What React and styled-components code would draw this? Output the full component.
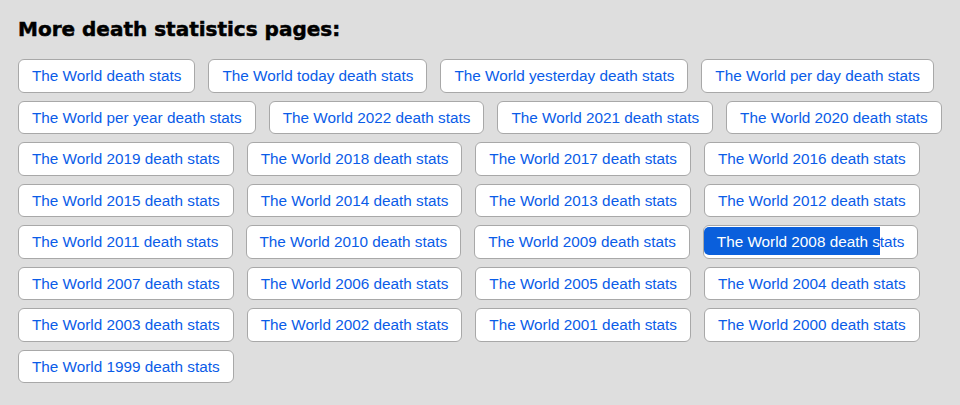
import React from "react";
import styled, { createGlobalStyle } from "styled-components";

const links = [
  "The World death stats",
  "The World today death stats",
  "The World yesterday death stats",
  "The World per day death stats",
  "The World per year death stats",
  "The World 2022 death stats",
  "The World 2021 death stats",
  "The World 2020 death stats",
  "The World 2019 death stats",
  "The World 2018 death stats",
  "The World 2017 death stats",
  "The World 2016 death stats",
  "The World 2015 death stats",
  "The World 2014 death stats",
  "The World 2013 death stats",
  "The World 2012 death stats",
  "The World 2011 death stats",
  "The World 2010 death stats",
  "The World 2009 death stats",
  "The World 2008 death stats",
  "The World 2007 death stats",
  "The World 2006 death stats",
  "The World 2005 death stats",
  "The World 2004 death stats",
  "The World 2003 death stats",
  "The World 2002 death stats",
  "The World 2001 death stats",
  "The World 2000 death stats",
  "The World 1999 death stats",
];

function App() {
  return (
    <>
      <GlobalStyle />
      <Page>
        <Heading>More death statistics pages:</Heading>
        <LinkList>
          {links.map((text) =>
            text === "The World 2008 death stats" ? (
              <LinkButton key={text} href="#">
                <Selected>The World 2008 death s</Selected>tats
              </LinkButton>
            ) : (
              <LinkButton key={text} href="#">
                {text}
              </LinkButton>
            )
          )}
        </LinkList>
      </Page>
    </>
  );
}

const GlobalStyle = createGlobalStyle`
  html, body {
    margin: 0;
    padding: 0;
    background: #dedede;
  }
  body {
    font-family: "Liberation Sans", Arial, sans-serif;
  }
`;

const Page = styled.main`
  padding: 18px 10px 0 18px;
`;

const Heading = styled.h2`
  margin: 0 0 18px;
  font-family: "DejaVu Sans", "Liberation Sans", sans-serif;
  font-size: 20px;
  line-height: 23px;
  font-weight: 700;
  color: #000;
  -webkit-text-stroke: 0.5px #000;
`;

const LinkList = styled.div`
  display: flex;
  flex-wrap: wrap;
  gap: 8px 13px;
`;

const LinkButton = styled.a`
  display: block;
  padding: 7px 13px;
  font-size: 15.3px;
  line-height: 17.5px;
  color: #0a5ce8;
  text-decoration: none;
  background: #fff;
  border: 1px solid #a8a8a8;
  border-radius: 6px;
  white-space: nowrap;
`;

const Selected = styled.span`
  margin-left: -13px;
  padding: 6px 0 5px 13px;
  border-radius: 5px 0 0 5px;
  background: #0a5fdc;
  color: #fff;
`;

export default App;
